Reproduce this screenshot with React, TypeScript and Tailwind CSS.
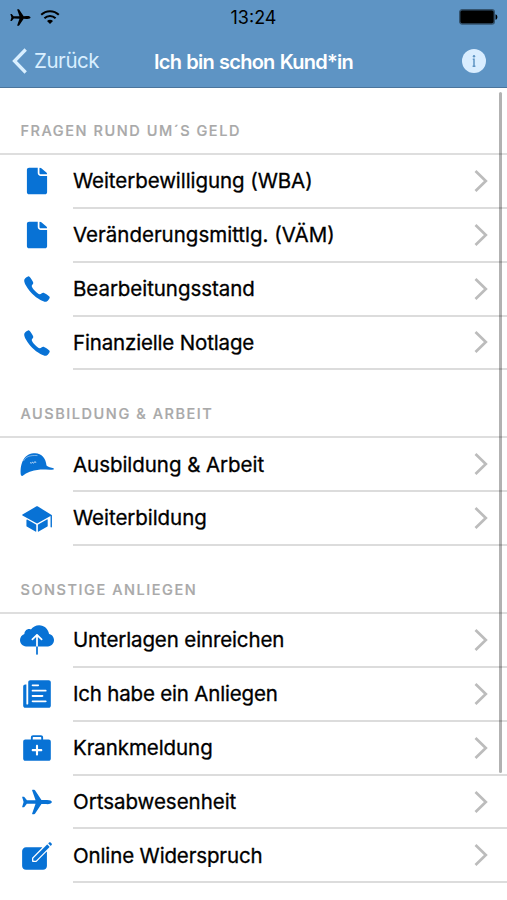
import type { ReactNode } from "react";
import {
  IoIosAirplane,
  IoIosCall,
  IoIosCloudUpload,
  IoIosCreate,
  IoIosDocument,
  IoIosMedkit,
  IoIosPaper,
  IoIosSchool,
} from "react-icons/io";

const iconSize = "size-[34px]";

function HelmetIcon() {
  return (
    <svg viewBox="0 0 36 36" className="-mx-px size-9">
      <path
        d="M2 28.5C0.5 19 4 7 14.5 6.3C22 5.4 26.8 10.5 27.5 18.5C29 20.2 32 20.8 34.7 21.2V22.6C29.5 23.2 24.5 22.2 19.8 22.7C13 23.3 8 25.4 3.4 28.9Z"
        fill="currentColor"
      />
      <path d="M4.5 14C6.5 10 10.5 8 18.5 8.6" fill="none" stroke="#fff" strokeOpacity=".5" strokeWidth=".9" />
      <path d="M11.2 15.5L12.3 16.3L13.4 15.2L14.6 16L15.8 14.9L17.2 15.3" fill="none" stroke="#fff" strokeOpacity=".9" strokeWidth=".9" />
    </svg>
  );
}

function Chevron() {
  return (
    <svg viewBox="0 0 14 24" className="mr-[19px] h-6 w-3.5 shrink-0">
      <path d="M1.5 2L11.8 12L1.5 22" fill="none" stroke="#bcbcbc" strokeWidth="2.7" />
    </svg>
  );
}

function Row({ icon, label, tracking = "" }: { icon: ReactNode; label: string; tracking?: string }) {
  return (
    <li className="flex h-[53.85px] items-center pl-5">
      <span className="flex w-[53px] shrink-0 pb-px text-[#0872d5]">{icon}</span>
      <div className="flex h-full flex-1 items-center justify-between border-b-2 border-[#dcdcdc]">
        <span className={`whitespace-nowrap pt-px text-[20.5px] leading-none text-black [-webkit-text-stroke:0.3px_black] ${tracking}`}>
          {label}
        </span>
        <Chevron />
      </div>
    </li>
  );
}

function Section({ title, first = false, children }: { title: string; first?: boolean; children: ReactNode }) {
  return (
    <section>
      <h2
        className={`flex items-end border-b-2 border-[#dedede] pb-[13.5px] pl-[20.5px] text-[14.5px] font-medium leading-[18px] tracking-[1.55px] text-[#a9a9a9] [-webkit-text-stroke:0.2px_#a9a9a9] ${first ? "h-[67px]" : "h-[68px]"}`}
      >
        {title}
      </h2>
      <ul>{children}</ul>
    </section>
  );
}

export default function App() {
  return (
    <div className="relative h-[900px] w-full overflow-hidden bg-white font-['Inter','Liberation_Sans',sans-serif]">
      <header className="h-[88px] border-b border-[#4b759c] bg-[#5e94c4]">
        <div className="grid h-[34px] grid-cols-3 items-center">
          <div className="flex items-center gap-2 pl-[9px] text-black">
            <IoIosAirplane className="size-[23px]" />
            <svg viewBox="0 0 20 16" className="h-4 w-5" fill="none" stroke="black" strokeWidth="2">
              <path d="M1.2 5.8C6 .9 14 .9 18.8 5.8" />
              <path d="M4.4 9.2C7.5 6.1 12.5 6.1 15.6 9.2" />
              <path d="M10 15L7 12C8.7 10.4 11.3 10.4 13 12Z" fill="black" stroke="none" />
            </svg>
          </div>
          <span className="pt-px text-center text-[18px] leading-none text-black">13:24</span>
          <svg viewBox="0 0 39 16" className="mr-[9px] h-4 w-[39px] justify-self-end">
            <rect x=".7" y=".7" width="34.6" height="14.3" rx="2.5" fill="#000" stroke="#34536e" strokeWidth="1.4" />
            <path d="M36.5 5.2C39 6 39 10 36.5 10.8Z" fill="#000" />
          </svg>
        </div>
        <div className="grid h-[53px] grid-cols-[1fr_auto_1fr] items-center">
          <div className="flex items-center gap-1.5 pl-3 text-[#d9efff]">
            <svg viewBox="0 0 16 26" className="h-[26px] w-4">
              <path d="M13.7 1.5L2.5 13L13.7 24.5" fill="none" stroke="currentColor" strokeWidth="3.3" />
            </svg>
            <span className="pt-px text-[20.5px] leading-none tracking-[-0.45px]">Zurück</span>
          </div>
          <h1 className="pt-0.5 text-[20px] font-semibold leading-none tracking-[-0.75px] text-white [word-spacing:0.8px]">
            Ich bin schon Kund*in
          </h1>
          <svg viewBox="0 0 24 24" className="mr-[21px] size-6 justify-self-end">
            <circle cx="12" cy="12" r="12" fill="#d9edff" />
            <circle cx="12" cy="7.3" r="1.2" fill="#5e94c4" />
            <path d="M10.8 10.2H12V17.2M10.6 17.2H13.4" fill="none" stroke="#5e94c4" strokeWidth="1.5" />
          </svg>
        </div>
      </header>
      <main>
        <Section title="FRAGEN RUND UM´S GELD" first>
          <Row icon={<IoIosDocument className={iconSize} />} label="Weiterbewilligung (WBA)" tracking="tracking-[-0.07px]" />
          <Row icon={<IoIosDocument className={iconSize} />} label="Veränderungsmittlg. (VÄM)" />
          <Row icon={<IoIosCall className={iconSize} />} label="Bearbeitungsstand" tracking="tracking-[-0.06px]" />
          <Row icon={<IoIosCall className={iconSize} />} label="Finanzielle Notlage" tracking="tracking-[-0.16px]" />
        </Section>
        <Section title="AUSBILDUNG & ARBEIT">
          <Row icon={<HelmetIcon />} label="Ausbildung & Arbeit" tracking="tracking-[-0.05px]" />
          <Row icon={<IoIosSchool className={iconSize} />} label="Weiterbildung" tracking="tracking-[-0.05px]" />
        </Section>
        <Section title="SONSTIGE ANLIEGEN">
          <Row icon={<IoIosCloudUpload className={iconSize} />} label="Unterlagen einreichen" tracking="tracking-[-0.13px]" />
          <Row icon={<IoIosPaper className={iconSize} />} label="Ich habe ein Anliegen" tracking="tracking-[-0.19px]" />
          <Row icon={<IoIosMedkit className={iconSize} />} label="Krankmeldung" tracking="tracking-[-0.08px]" />
          <Row icon={<IoIosAirplane className={iconSize} />} label="Ortsabwesenheit" tracking="tracking-[-0.03px]" />
          <Row icon={<IoIosCreate className={iconSize} />} label="Online Widerspruch" tracking="tracking-[-0.14px]" />
        </Section>
      </main>
      <div className="absolute right-[5px] top-[92px] h-[681px] w-[3.5px] rounded-full bg-black/30" />
    </div>
  );
}
